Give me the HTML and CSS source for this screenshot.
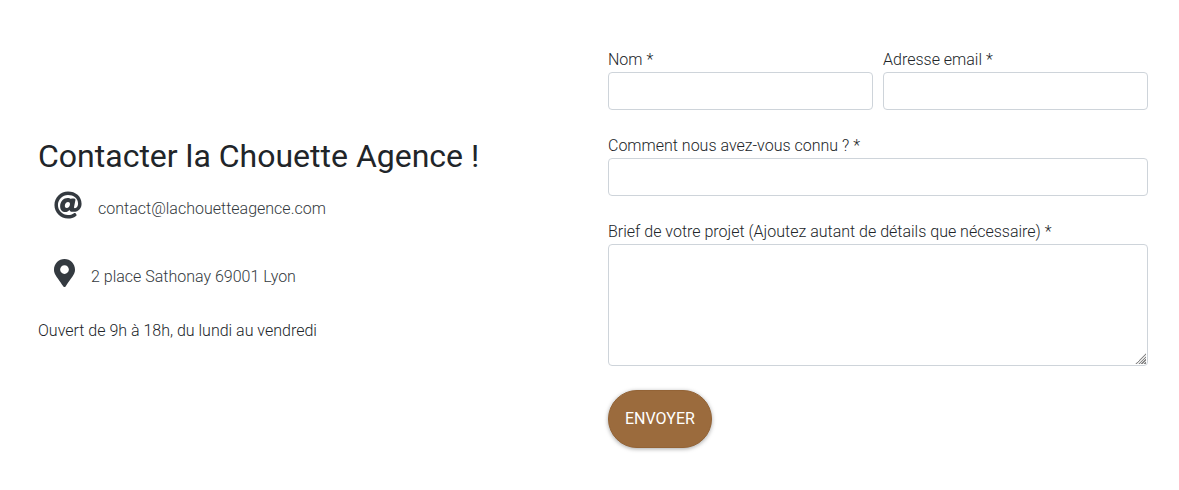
FILE: index.html
```html
<!DOCTYPE html>
<html lang="fr">
<head>
<meta charset="utf-8">
<meta name="viewport" content="width=device-width, initial-scale=1">
<title>Contacter la Chouette Agence</title>
<link rel="stylesheet" href="styles.css">
</head>
<body>
<main class="contact">
  <section class="info">
    <h1 class="info-title">Contacter la Chouette Agence !</h1>
    <ul class="info-list">
      <li class="info-line">
        <svg class="icon" width="28" height="28" viewBox="0 0 512 512" aria-hidden="true"><path d="M256 8C118.941 8 8 118.919 8 256c0 137.058 110.919 248 248 248 52.925 0 104.68-17.078 147.092-48.319 10.501-7.735 12.446-22.664 4.225-32.789l-10.174-12.53c-7.832-9.646-21.873-11.483-31.92-4.173C333.767 429.102 295.354 440 256 440c-101.458 0-184-82.542-184-184S154.542 72 256 72c100.139 0 184 57.619 184 160 0 38.786-21.093 79.742-58.17 83.693-17.349-.454-16.91-12.857-13.476-30.024l23.433-121.11C394.653 149.75 383.308 136 368.225 136h-44.981a13.518 13.518 0 0 0-13.432 11.993l-.01.092c-14.697-17.901-40.448-21.775-59.971-21.775-74.58 0-137.831 62.234-137.831 151.46 0 65.303 36.785 105.87 96 105.87 26.984 0 57.369-15.637 74.991-38.333 9.522 34.104 40.613 34.103 70.71 34.103C462.609 379.41 504 307.798 504 232 504 95.653 394.023 8 256 8zm-21.68 304.43c-22.249 0-36.07-15.623-36.07-40.771 0-44.993 30.779-72.729 58.63-72.729 22.292 0 35.601 15.241 35.601 40.77 0 45.061-33.875 72.73-58.161 72.73z"/></svg>
        <span class="info-text">contact@lachouetteagence.com</span>
      </li>
      <li class="info-line">
        <svg class="icon" width="21" height="28" viewBox="0 0 384 512" aria-hidden="true"><path d="M172.268 501.67C26.97 291.031 0 269.413 0 192 0 85.961 85.961 0 192 0s192 85.961 192 192c0 77.413-26.97 99.031-172.268 309.67-9.535 13.774-29.93 13.773-39.464 0zM192 272c44.183 0 80-35.817 80-80s-35.817-80-80-80-80 35.817-80 80 35.817 80 80 80z"/></svg>
        <span class="info-text">2 place Sathonay 69001 Lyon</span>
      </li>
    </ul>
    <p class="info-hours">Ouvert de 9h à 18h, du lundi au vendredi</p>
  </section>
  <form class="form">
    <div class="form-row">
      <div class="field">
        <label for="name">Nom *</label>
        <input class="control" id="name" type="text">
      </div>
      <div class="field">
        <label for="email">Adresse email *</label>
        <input class="control" id="email" type="email">
      </div>
    </div>
    <div class="field">
      <label for="source">Comment nous avez-vous connu ? *</label>
      <input class="control" id="source" type="text">
    </div>
    <div class="field">
      <label for="brief">Brief de votre projet (Ajoutez autant de détails que nécessaire) *</label>
      <textarea class="control control-area" id="brief" rows="4"></textarea>
    </div>
    <button class="submit" type="submit">ENVOYER</button>
  </form>
</main>
</body>
</html>
```
FILE: styles.css
```css
* {
  box-sizing: border-box;
}

body {
  margin: 0;
  background: #fff;
  color: #212529;
  font-family: Roboto, sans-serif;
  font-size: 16px;
  font-weight: 300;
  line-height: 24px;
}

.contact {
  display: grid;
  grid-template-columns: 1fr 1fr;
  gap: 30px;
  align-items: center;
  padding: 48px 31px 42px 38px;
}

.info-title {
  margin: 0 0 16px;
  font-size: 32px;
  font-weight: 400;
  line-height: 38px;
}

.info-list {
  display: flex;
  flex-direction: column;
  gap: 38px;
  margin: 0 0 30px;
  padding: 0 0 0 16px;
  list-style: none;
}

.info-line {
  display: flex;
  align-items: flex-start;
  gap: 16px;
}

.info-text {
  padding-top: 6px;
  color: #343a40;
}

.icon {
  fill: #343a40;
}

.info-hours {
  margin: 0 0 16px;
}

.form {
  display: flex;
  flex-direction: column;
  align-items: stretch;
  gap: 24px;
}

.form-row {
  display: grid;
  grid-template-columns: 1fr 1fr;
  gap: 10px;
}

.field {
  display: flex;
  flex-direction: column;
}

.control {
  width: 100%;
  height: 38px;
  padding: 6px 12px;
  border: 1px solid #ced4da;
  border-radius: 4px;
  background: #fff;
  color: #495057;
  font: inherit;
}

.control-area {
  height: 122px;
  resize: vertical;
}

/* Diagonal grip in the lower right corner */
.control-area::-webkit-resizer {
  background-image:
    linear-gradient(135deg, #fff 50%, transparent 50%),
    repeating-linear-gradient(135deg, #888 0 1px, #e4e4e4 1px 2px);
  background-position: 3px 3px;
  background-size: 11px 11px;
  background-repeat: no-repeat;
}

.submit {
  align-self: flex-start;
  padding: 16px;
  border: 1px solid #936336;
  border-radius: 32px;
  background: #9b6b3d;
  color: #fff;
  font: inherit;
  font-weight: 400;
  box-shadow: 0 1px 4px rgba(0, 0, 0, 0.35);
}
```
